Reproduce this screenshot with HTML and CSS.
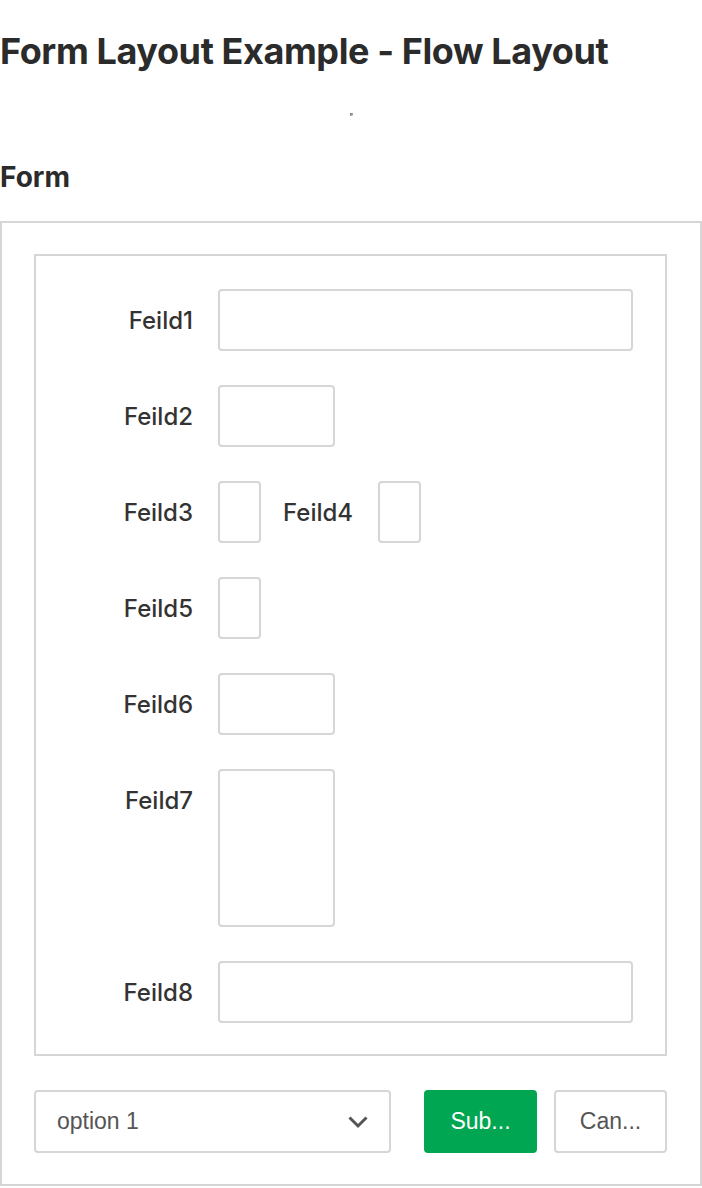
FILE: index.html
```html
<!DOCTYPE html>
<html lang="en">
<head>
<meta charset="utf-8">
<title>Form Layout Example - Flow Layout</title>
<link rel="stylesheet" href="styles.css">
</head>
<body>
  <h1 class="title">Form Layout Example - Flow Layout</h1>
  <div class="mark-row"><span class="mark"></span></div>
  <h2 class="subtitle">Form</h2>
  <div class="panel">
    <div class="fields">
      <div class="row">
        <label class="lbl">Feild1</label>
        <div class="input w-wide"></div>
      </div>
      <div class="row">
        <label class="lbl">Feild2</label>
        <div class="input w-mid"></div>
      </div>
      <div class="row">
        <label class="lbl">Feild3</label>
        <div class="input w-narrow"></div>
        <label class="lbl-inline">Feild4</label>
        <div class="input w-narrow"></div>
      </div>
      <div class="row">
        <label class="lbl">Feild5</label>
        <div class="input w-narrow"></div>
      </div>
      <div class="row">
        <label class="lbl">Feild6</label>
        <div class="input w-mid"></div>
      </div>
      <div class="row row-top">
        <label class="lbl">Feild7</label>
        <div class="input w-mid tall"></div>
      </div>
      <div class="row">
        <label class="lbl">Feild8</label>
        <div class="input w-wide"></div>
      </div>
    </div>
    <div class="actions">
      <div class="select">
        <span class="select-text">option 1</span>
        <svg class="chev" width="20" height="13" viewBox="0 0 20 13"><polyline points="1.5,1.5 10,10 18.5,1.5" fill="none" stroke="#555" stroke-width="3"/></svg>
      </div>
      <button class="btn btn-primary">Sub...</button>
      <button class="btn btn-default">Can...</button>
    </div>
  </div>
</body>
</html>
```
FILE: styles.css
```css
html, body {
  margin: 0;
  padding: 0;
  background: #fff;
}
body {
  width: 702px;
  font-family: Inter, "Liberation Sans", sans-serif;
  color: #2b2b2b;
}
.title {
  margin: 30px 0 0;
  font-family: Inter, sans-serif;
  font-weight: 700;
  font-size: 36px;
  letter-spacing: -0.4px;
  line-height: 43px;
  color: #2b2b2b;
  white-space: nowrap;
}
.mark-row {
  margin-top: 40px;
  height: 3px;
  display: flex;
  justify-content: center;
}
.mark {
  display: block;
  width: 3px;
  height: 3px;
  background: linear-gradient(135deg, #777 0%, #999 50%, #ddd 100%);
}
.subtitle {
  margin: 45px 0 0;
  font-family: Inter, sans-serif;
  font-weight: 700;
  font-size: 28px;
  letter-spacing: 0;
  line-height: 32px;
  color: #2b2b2b;
}
.panel {
  margin-top: 28px;
  border: 2px solid #d6d6d6;
  padding: 31px 33px 31px 32px;
}
.fields {
  border: 2px solid #d6d6d6;
  padding: 33px 0 31px;
  display: flex;
  flex-direction: column;
  gap: 34px;
}
.row {
  display: flex;
  align-items: center;
  height: 62px;
}
.row-top {
  align-items: flex-start;
  height: auto;
}
.lbl, .lbl-inline {
  font-family: Inter, "Noto Sans", sans-serif;
  font-weight: 500;
  font-size: 24px;
  color: #333;
  height: 62px;
  display: flex;
  align-items: center;
}
.lbl {
  width: 157px;
  justify-content: flex-end;
  margin-right: 25px;
}
.lbl-inline {
  margin: 0 25px 0 22px;
}
.input {
  box-sizing: border-box;
  height: 62px;
  border: 2px solid #d6d6d6;
  border-radius: 4px;
  background: #fff;
}
.w-wide { width: 415px; }
.w-mid { width: 117px; }
.w-narrow { width: 43px; }
.tall { height: 158px; }
.actions {
  display: flex;
  margin-top: 34px;
  height: 63px;
}
.select {
  box-sizing: border-box;
  width: 357px;
  height: 63px;
  border: 2px solid #d6d6d6;
  border-radius: 4px;
  display: flex;
  align-items: center;
  justify-content: space-between;
  padding: 0 21px 0 21px;
}
.select-text {
  font-family: "Liberation Sans", Arial, sans-serif;
  font-size: 23px;
  color: #555;
}
.chev {
  display: block;
  margin-top: 1px;
}
.btn {
  box-sizing: border-box;
  width: 113px;
  height: 63px;
  border-radius: 4px;
  font-family: "Liberation Sans", Arial, sans-serif;
  font-size: 23px;
  padding: 0;
  cursor: pointer;
}
.btn-primary {
  margin-left: 33px;
  background: #00a651;
  border: 2px solid #00a651;
  color: #fff;
}
.btn-default {
  margin-left: 17px;
  background: #fff;
  border: 2px solid #d6d6d6;
  color: #555;
}
```
